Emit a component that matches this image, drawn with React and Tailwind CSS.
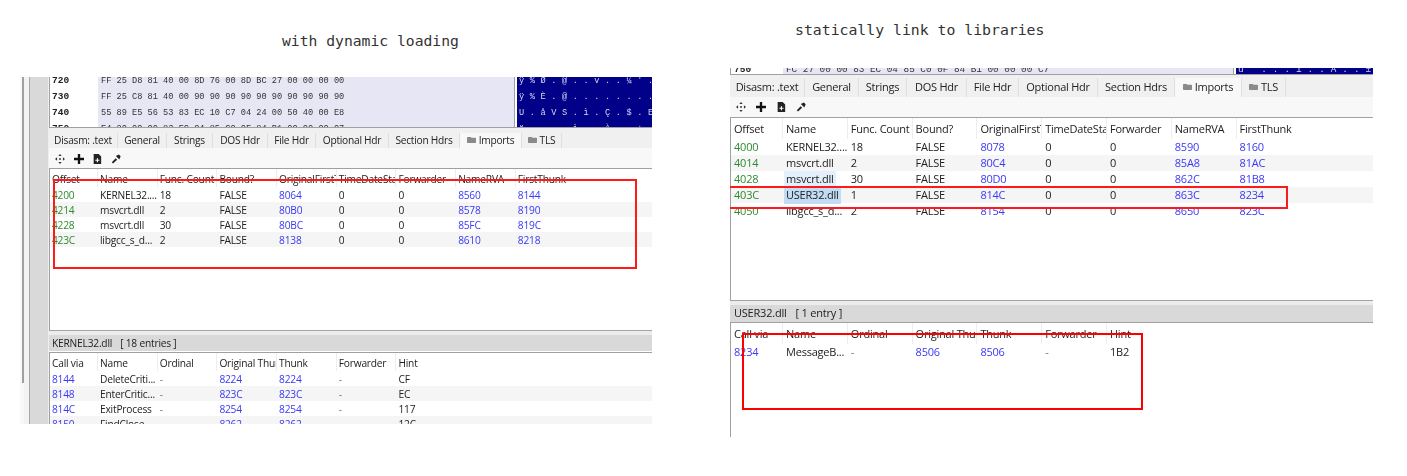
import React from 'react';

const FolderIcon = () => (
  <svg viewBox="0 0 12 8" className="w-[9px] h-[6px] mb-[2px] shrink-0 fill-[#8a8a8a]">
    <path d="M0 1 L0 7 Q0 8 1 8 L11 8 Q12 8 12 7 L12 2 Q12 1 11 1 L6 1 L5 0 L1 0 Q0 0 0 1 Z" />
  </svg>
);

const ToolIcons = () => (
  <>
    <svg viewBox="0 0 12 12" className="w-[10px] h-[10px] fill-[#333]">
      <path d="M6 0 L8 2.5 L4 2.5 Z M6 12 L8 9.5 L4 9.5 Z M0 6 L2.5 4 L2.5 8 Z M12 6 L9.5 4 L9.5 8 Z" />
      <rect x="5" y="5" width="2" height="2" />
    </svg>
    <svg viewBox="0 0 12 12" className="w-[10px] h-[10px] fill-[#111]">
      <path d="M4.6 0 H7.4 V4.6 H12 V7.4 H7.4 V12 H4.6 V7.4 H0 V4.6 H4.6 Z" />
    </svg>
    <svg viewBox="0 0 12 12" className="w-[10px] h-[10px] fill-[#222]">
      <path fillRule="evenodd" d="M2 0 H8 L11 3 V12 H2 Z M5.8 5 V6.8 H4 V8.2 H5.8 V10 H7.2 V8.2 H9 V6.8 H7.2 V5 Z" />
    </svg>
    <svg viewBox="0 0 12 12" className="w-[10px] h-[10px] fill-[#222]">
      <path d="M1 9.8 L5.6 5 L7.4 6.8 L2.4 11.4 Z M5.8 2.4 L10 6.6 L11.6 2.8 L9.4 0.6 Z" />
    </svg>
  </>
);

const Tabs = ({ tabs, height, inset }) => (
  <div className={`flex bg-[#f0f0f0] ${height} ${inset}`}>
    {tabs.map(([label, width, folder]) => {
      const active = label === 'Imports';
      return (
        <div
          key={label}
          className={`flex items-center justify-center gap-[3px] border-r border-[#dfdfdf] tracking-[-0.25px] ${width} ${active ? 'bg-[#f8f8f8]' : ''}`}
        >
          {folder && <FolderIcon />}
          <span>{label}</span>
        </div>
      );
    })}
  </div>
);

const Table = ({ grid, headerH, rowH, headers, rows, colors, height, pad, rowPad, headPad }) => (
  <div className={`overflow-hidden bg-white border-l border-[#a0a0a0] ${height}`}>
    <div className={`grid ${grid} ${headerH} items-center`}>
      {headers.map((h, i) => (
        <div
          key={h}
          className={`overflow-hidden whitespace-nowrap h-full flex items-center ${headPad} ${pad} ${i < headers.length - 1 ? 'border-r border-[#eeeeee]' : ''}`}
        >
          {h}
        </div>
      ))}
    </div>
    {rows.map((row, r) => (
      <div key={r} className={`grid ${grid} ${rowH} items-center ${r % 2 === 1 ? 'bg-[#f5f5f5]' : ''}`}>
        {row.map((cell, c) => (
          <div key={c} className={`whitespace-nowrap ${pad} ${rowPad} ${colors[c] || 'text-[#222222]'}`}>
            {cell === 'msvcrt.dll*' ? (
              <span className="bg-[#e3effa] inline-block pr-[2px] -ml-[2px] pl-[2px]">msvcrt.dll</span>
            ) : cell === 'USER32.dll' ? (
              <span className="bg-[#c2dcf4] inline-block pr-[2px] -ml-[2px] pl-[2px]">USER32.dll</span>
            ) : (
              cell
            )}
          </div>
        ))}
      </div>
    ))}
  </div>
);

const GREEN = 'text-[#2e8b2e]';
const BLUE = 'text-[#3a3af5]';
const DIM = 'text-[#777777]';

const leftTabs = [
  ['Disasm: .text', 'w-[69px]'],
  ['General', 'w-[49px]'],
  ['Strings', 'w-[46px]'],
  ['DOS Hdr', 'w-[55px]'],
  ['File Hdr', 'w-[48px]'],
  ['Optional Hdr', 'w-[73px]'],
  ['Section Hdrs', 'w-[71px]'],
  ['Imports', 'w-[62px]', true],
  ['TLS', 'w-[40px]', true],
];

const rightTabs = [
  ['Disasm: .text', 'w-[75px]'],
  ['General', 'w-[54px]'],
  ['Strings', 'w-[48px]'],
  ['DOS Hdr', 'w-[60px]'],
  ['File Hdr', 'w-[52px]'],
  ['Optional Hdr', 'w-[79px]'],
  ['Section Hdrs', 'w-[77px]'],
  ['Imports', 'w-[67px]', true],
  ['TLS', 'w-[44px]', true],
];

const importHeaders = ['Offset', 'Name', 'Func. Count', 'Bound?', 'OriginalFirstThunk', 'TimeDateStamp', 'Forwarder', 'NameRVA', 'FirstThunk'];
const thunkHeaders = ['Call via', 'Name', 'Ordinal', 'Original Thunk', 'Thunk', 'Forwarder', 'Hint'];
const importColors = [GREEN, '', '', '', BLUE, '', '', BLUE, BLUE];
const thunkColors = [BLUE, '', DIM, BLUE, BLUE, DIM, ''];

const leftImports = [
  ['4200', 'KERNEL32....', '18', 'FALSE', '8064', '0', '0', '8560', '8144'],
  ['4214', 'msvcrt.dll', '2', 'FALSE', '80B0', '0', '0', '8578', '8190'],
  ['4228', 'msvcrt.dll', '30', 'FALSE', '80BC', '0', '0', '85FC', '819C'],
  ['423C', 'libgcc_s_d...', '2', 'FALSE', '8138', '0', '0', '8610', '8218'],
];

const rightImports = [
  ['4000', 'KERNEL32....', '18', 'FALSE', '8078', '0', '0', '8590', '8160'],
  ['4014', 'msvcrt.dll', '2', 'FALSE', '80C4', '0', '0', '85A8', '81AC'],
  ['4028', 'msvcrt.dll*', '30', 'FALSE', '80D0', '0', '0', '862C', '81B8'],
  ['403C', 'USER32.dll', '1', 'FALSE', '814C', '0', '0', '863C', '8234'],
  ['4050', 'libgcc_s_d...', '2', 'FALSE', '8154', '0', '0', '8650', '823C'],
];

const leftThunks = [
  ['8144', 'DeleteCriti...', '-', '8224', '8224', '-', 'CF'],
  ['8148', 'EnterCritic...', '-', '823C', '823C', '-', 'EC'],
  ['814C', 'ExitProcess', '-', '8254', '8254', '-', '117'],
  ['8150', 'FindClose', '-', '8262', '8262', '-', '12C'],
];

const rightThunks = [['8234', 'MessageB...', '-', '8506', '8506', '-', '1B2']];

const hexRows = [
  ['720', 'FF 25 D8 81 40 00 8D 76 00 8D BC 27 00 00 00 00', "ÿ % Ø . @ . . v . . ¼ ' ."],
  ['730', 'FF 25 C8 81 40 00 90 90 90 90 90 90 90 90 90 90', 'ÿ % È . @ . . . . . . . .'],
  ['740', '55 89 E5 56 53 83 EC 10 C7 04 24 00 50 40 00 E8', 'U . å V S . ì . Ç . $ . E'],
  ['750', 'E4 20 00 00 83 EC 04 85 C0 0F 84 B1 00 00 00 07', "ä   . . . ì . . À . . ± ."],
];

const HexRow = ({ row, offsetCls, hexCls, size }) => (
  <div className={`flex h-[16px] items-center font-['Liberation_Mono',monospace] leading-[16px] tracking-normal whitespace-pre ${size}`}>
    <div className={`font-bold text-[#222222] text-[9.5px] ${offsetCls}`}>{row[0]}</div>
    <div className={`bg-[#e6e6f5] text-[#333333] pl-[3px] h-full border-r border-[#a0a0a0] ${hexCls}`}>{row[1]}</div>
    <div className="bg-[#000088] text-[#d8d8ee] pl-[2px] h-full ml-[2px] flex-1 overflow-hidden tracking-[0.2px]">{row[2]}</div>
  </div>
);

const Splitter = () => (
  <div className="h-[5px] bg-[#ececec] border-t border-[#a3a3a8]" />
);

const LeftPanel = () => (
  <div className="flex h-[347px] w-[632px] overflow-hidden blur-[0.35px] font-['Open_Sans',sans-serif] text-[10.2px] tracking-[-0.2px] text-[#222222]">
    <div className="w-[2px] bg-[#f8f8f8]" />
    <div className="w-[2px] bg-[#f8f8f8]">
      <div className="h-[306px] bg-[#a0a0a0]" />
    </div>
    <div className="w-[5px] bg-[#f3f3f3]" />
    <div className="w-[1px] bg-[#a8a8a8]" />
    <div className="w-[18px] bg-[#d9d9d9]" />
    <div className="w-[1px] bg-[#eeeeee]" />
    <div className="flex-1 min-w-0">
      <div className="h-[51px] overflow-hidden border-b border-[#a0a0a0] border-l border-l-[#a0a0a0]">
        <div className="-mt-[4px]">
          {hexRows.map((r) => (
            <HexRow key={r[0]} row={r} offsetCls="w-[48px] pl-[2px]" hexCls="w-[417px]" size="text-[8.65px]" />
          ))}
        </div>
      </div>
      <Tabs tabs={leftTabs} height="h-[20px]" inset="pt-[5px]" />
      <div className="h-[20px] bg-[#f8f8f8] flex items-center gap-[8.5px] pl-[6px] pt-[1px]">
        <ToolIcons />
      </div>
      <div className="border-t border-[#a0a0a0]" />
      <Table
        grid="grid-cols-[48px_repeat(8,59.7px)]"
        headerH="h-[18px]"
        rowH="h-[15px]"
        headers={importHeaders}
        rows={leftImports}
        colors={importColors}
        height="h-[161px]"
        pad="pl-[2px]"
        rowPad="pt-[1px]"
        headPad="pt-[3px]"
      />
      <Splitter />
      <div className="h-[16px] bg-[#d9d9d9] flex items-center pl-[3px] pt-[1px] gap-[8px] whitespace-pre">
        <span>KERNEL32.dll</span>
        <span>[ 18 entries ]</span>
      </div>
      <div className="border-t border-[#a0a0a0] mt-[1px]" />
      <Table
        grid="grid-cols-[48px_repeat(6,59.7px)]"
        headerH="h-[18px]"
        rowH="h-[15px]"
        headers={thunkHeaders}
        rows={leftThunks}
        colors={thunkColors}
        height="h-[80px]"
        pad="pl-[2px]"
        rowPad="pt-[1px]"
        headPad="pt-[3px]"
      />
    </div>
  </div>
);

const RightPanel = () => (
  <div className="h-[369px] w-[643px] overflow-hidden blur-[0.35px] font-['Open_Sans',sans-serif] text-[11px] tracking-[-0.22px] text-[#222222]">
    <div className="h-[7px] overflow-hidden border-b border-[#a0a0a0] border-l border-l-[#a0a0a0]">
      <div className="-mt-[6px]">
        <HexRow
          row={['750', 'FC 27 00 00 83 EC 04 85 C0 0F 84 B1 00 00 00 C7', "ü ' . . . ì . . À . . ± ."]}
          offsetCls="w-[52px] pl-[3px]"
          hexCls="w-[451px]"
          size="text-[9.33px]"
        />
      </div>
    </div>
    <Tabs tabs={rightTabs} height="h-[22px]" inset="pt-[3px]" />
    <div className="h-[20px] bg-[#f8f8f8] flex items-center gap-[10px] pl-[6px]">
      <ToolIcons />
    </div>
    <div className="border-t border-[#a0a0a0]" />
    <Table
      grid="grid-cols-[52px_repeat(8,64.8px)]"
      headerH="h-[21px]"
      rowH="h-[16px]"
      headers={importHeaders}
      rows={rightImports}
      colors={importColors}
      height="h-[182px]"
      pad="pl-[3px]"
      rowPad=""
      headPad="pt-[2px]"
    />
    <Splitter />
    <div className="h-[17px] bg-[#d9d9d9] flex items-center pl-[4px] gap-[9px] whitespace-pre">
      <span>USER32.dll</span>
      <span>[ 1 entry ]</span>
    </div>
    <div className="border-t border-[#a0a0a0]" />
    <Table
      grid="grid-cols-[52px_repeat(6,64.8px)]"
      headerH="h-[21px]"
      rowH="h-[16px]"
      headers={thunkHeaders}
      rows={rightThunks}
      colors={thunkColors}
      height="h-[114px]"
      pad="pl-[3px]"
      rowPad=""
      headPad="pt-[2px]"
    />
  </div>
);

const App = () => {
  return (
    <div className="relative flex w-[1407px] h-[476px] bg-white overflow-hidden">
      <section className="ml-[20px] w-[632px]">
        <h2 className="mt-[33px] h-[16px] leading-[16px] mb-[28px] pl-[262px] font-['DejaVu_Sans_Mono',monospace] text-[14.7px] font-normal text-[#333333] whitespace-nowrap">
          with dynamic loading
        </h2>
        <LeftPanel />
      </section>
      <section className="ml-[78px] w-[643px]">
        <h2 className="mt-[22px] h-[16px] leading-[16px] mb-[30px] pl-[65px] font-['DejaVu_Sans_Mono',monospace] text-[14.8px] font-normal text-[#333333] whitespace-nowrap">
          statically link to libraries
        </h2>
        <RightPanel />
      </section>

      {/* red annotation boxes drawn over the screenshots */}
      <div className="absolute left-[53px] top-[179px] w-[584px] h-[90px] border-2 border-[#ff1a1a]" />
      <div className="absolute left-[730px] top-[186px] w-[558px] h-[23px] border-2 border-l-0 border-[#ff1a1a]" />
      <div className="absolute left-[742px] top-[333px] w-[401px] h-[77px] border-2 border-[#ff0000]" />
    </div>
  );
};

export default App;
